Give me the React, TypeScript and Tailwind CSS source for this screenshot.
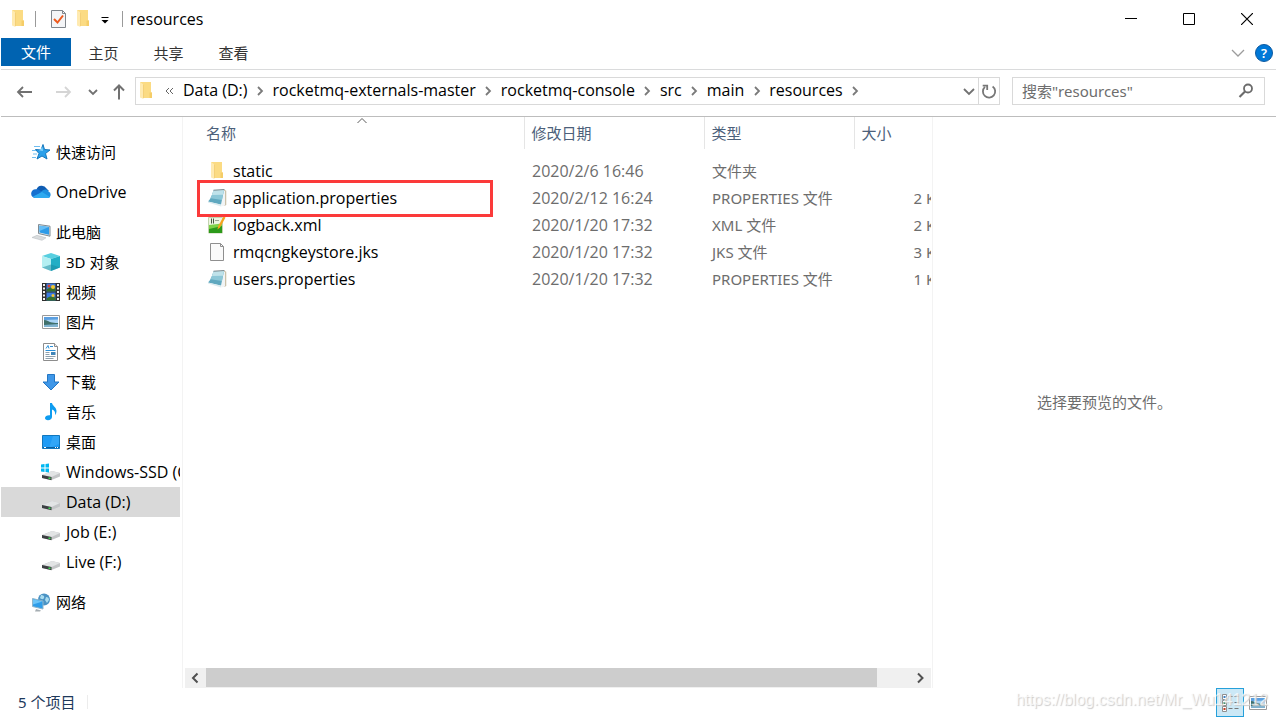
import { useState } from 'react'
import type { ReactNode } from 'react'
import { clsx } from 'clsx'

type IconName =
  | 'star' | 'cloud' | 'pc' | 'cube' | 'film' | 'picture' | 'document' | 'download'
  | 'music' | 'desktop' | 'winDrive' | 'drive' | 'network'

type FileKind = 'folder' | 'notepad' | 'xml' | 'blank'

const SIDEBAR: { label: string; icon: IconName; latin?: boolean; children?: { label: string; icon: IconName; latin?: boolean }[] }[] = [
  { label: '快速访问', icon: 'star' },
  { label: 'OneDrive', icon: 'cloud', latin: true },
  {
    label: '此电脑',
    icon: 'pc',
    children: [
      { label: '3D 对象', icon: 'cube' },
      { label: '视频', icon: 'film' },
      { label: '图片', icon: 'picture' },
      { label: '文档', icon: 'document' },
      { label: '下载', icon: 'download' },
      { label: '音乐', icon: 'music' },
      { label: '桌面', icon: 'desktop' },
      { label: 'Windows-SSD (C:)', icon: 'winDrive', latin: true },
      { label: 'Data (D:)', icon: 'drive', latin: true },
      { label: 'Job (E:)', icon: 'drive', latin: true },
      { label: 'Live (F:)', icon: 'drive', latin: true },
    ],
  },
  { label: '网络', icon: 'network' },
]

const PATH = ['Data (D:)', 'rocketmq-externals-master', 'rocketmq-console', 'src', 'main', 'resources']

const FILES: { name: string; kind: FileKind; date: string; type: string; size: string; marked?: boolean }[] = [
  { name: 'static',                 kind: 'folder',  date: '2020/2/6 16:46',  type: '文件夹',          size: '' },
  { name: 'application.properties', kind: 'notepad', date: '2020/2/12 16:24', type: 'PROPERTIES 文件', size: '2 KB', marked: true },
  { name: 'logback.xml',            kind: 'xml',     date: '2020/1/20 17:32', type: 'XML 文件',        size: '2 KB' },
  { name: 'rmqcngkeystore.jks',     kind: 'blank',   date: '2020/1/20 17:32', type: 'JKS 文件',        size: '3 KB' },
  { name: 'users.properties',       kind: 'notepad', date: '2020/1/20 17:32', type: 'PROPERTIES 文件', size: '1 KB' },
]

function Svg({ children, className = 'w-5 h-5', box = '0 0 20 20' }: {
  children: ReactNode; className?: string; box?: string
}) {
  return <svg viewBox={box} className={clsx('block shrink-0', className)} fill="none" aria-hidden="true">{children}</svg>
}

function FolderIcon() {
  return (
    <Svg>
      <path d="M4 1h11v10.500h1V17H7z" fill="#fbdb83" />
      <path d="M13.500 11.500H16V17h-2.500z" fill="#f5cd68" />
      <path d="M4 1l3.500 2.500V18L4 16.500z" fill="#ffeab0" />
      <path d="M7.500 3.500V17" stroke="#f1cb70" strokeWidth=".8" />
    </Svg>
  )
}

function PictureArt() {
  return (
    <>
      <path d="M1.500 3.500h17v13h-17z" fill="#fff" stroke="#9a9a9a" />
      <path d="M3 5h14v10H3z" fill="#a9d3f5" />
      <path d="M3 5h14v2.500L3 8z" fill="#5b9fe0" />
      <path d="M3 8c3 0 5 2 8 2.500s4 .500 6 .500v2H3z" fill="#3f6f6a" />
      <path d="M3 13l14-1v3H3z" fill="#7fb2cf" />
    </>
  )
}

function DriveArt() {
  return (
    <>
      <path d="M1 13l10-4 8 2v3.500L10.500 18 1 16z" fill="#c3c5c7" />
      <path d="M1 13l10-4 8 2-8.500 4z" fill="#e2e4e5" />
      <path d="M1 13l9.500 2v3.200L1 16z" fill="#3c4043" />
      <path d="M7.500 15.500h2V17h-2z" fill="#3ddc52" />
    </>
  )
}

const ICONS: Record<IconName, ReactNode> = {
  star: (
    <>
      <path d="M12 2.500l1.500 5 5.500.500-4.500 3.500 1.500 5.500-5-3-5 3 2-5.500L4.500 7.500l5.500.500z" fill="#2ba0ea" stroke="#1477bd" />
      <path d="M3 4.500h6M1 8.500h4M2 12h4M1 15.500h4" stroke="#6fbdf0" />
      <path d="M11.500 5l.500 4-4-.500z" fill="#7fd0fb" />
    </>
  ),
  cloud: (
    <>
      <path d="M5.500 7.500a5.500 5.500 0 0110-1L18 9 6 12z" fill="#0f5cb2" />
      <path d="M4.500 16A4.300 4.300 0 014.500 7.300c2-.300 3 .200 4.500 1.200L13 12z" fill="#1570d0" />
      <path d="M10 10c2-3 6-3.500 7.500-.500a3.400 3.400 0 01-.500 6.500H5z" fill="#1e90e0" />
      <path d="M2 14.500L11 10l8 5c-.500.700-1.200 1-2 1H4.500c-1 0-2-.700-2.500-1.500z" fill="#2eaaf0" />
    </>
  ),
  pc: (
    <>
      <path d="M7.500 2.500l11.500 1.700v10L7.500 11.500z" fill="#dfe7ec" stroke="#7f8b93" />
      <path d="M8.500 3.700l9.500 1.400v7.700l-9.500-2.200z" fill="#2d9be8" />
      <path d="M8.500 3.700l9.500 1.400-9.500 4z" fill="#65bdf5" />
      <path d="M1 15.500l5-2.200 9 2.500-4 2.500z" fill="#d9dcde" stroke="#b0b6ba" strokeWidth=".500" />
    </>
  ),
  cube: (
    <>
      <path d="M10 1l9 3-9 3-9-3z" fill="#58cfe0" />
      <path d="M1 4l9 3v12l-9-3.500z" fill="#b4eff2" />
      <path d="M19 4l-9 3v12l9-3.500z" fill="#22aec5" />
      <path d="M1 15.500l9-3 9 3-9 3.500z" fill="#16889f" fillOpacity=".5" />
    </>
  ),
  film: (
    <>
      <path d="M1 1h18v18H1z" fill="#2f2f2f" />
      <path d="M5.500 1.500h9v8h-9z" fill="#3a7be0" />
      <path d="M5.500 10.500h9v8h-9z" fill="#3a7be0" />
      <path d="M6 7l3-1.500 5.500 1v3h-9zM6 16l3-1.500 5.500 1v3h-9z" fill="#37702b" />
      <circle cx="12" cy="5" r="2" fill="#f3c72d" />
      <circle cx="8" cy="4" r="1.500" fill="#d94132" />
      <circle cx="12" cy="13.500" r="1.500" fill="#f3c72d" />
      <path d="M3 2v17M17 2v17" stroke="#f2f2f2" strokeWidth="2" strokeDasharray="2 1.500" />
    </>
  ),
  picture: <PictureArt />,
  document: (
    <>
      <path d="M2.500 1.500h11l3 3v14h-14z" fill="#fff" stroke="#8d8d8d" />
      <path d="M13.500 1.500v3h3" fill="#eee" stroke="#8d8d8d" />
      <path d="M5 6.500l2-3 1 3M9 4.500h3M4.500 8.500h10" stroke="#2a8fd8" />
      <path d="M4.500 10.500h4M4.500 12.500h4M4.500 14.500h10M4.500 16.500h8" stroke="#8ea0ad" />
      <path d="M10 10h4.500v3H10z" fill="#3f85b8" />
    </>
  ),
  download: <path d="M6.500 2.500h7v7.500h4.500L10 18 2 10h4.500z" fill="#3f97e8" stroke="#2376c4" />,
  music: (
    <path d="M9 1h2c.500 3 4.500 4 4.500 8 0 1.500-.500 3-1.500 4 .500-3-.500-4.500-3-5.500v7.500c0 2-1.800 3.200-4 3.200-1.800 0-3-.800-3-2.200 0-1.700 2-3 5-2.700z" fill="#0e9cf0" />
  ),
  desktop: (
    <>
      <path d="M1.500 3.500h17v13h-17z" fill="#1e9bf5" stroke="#1177bd" />
      <path d="M12 4h6v8L8 16z" fill="#45b2fa" fillOpacity=".5" />
      <path d="M2 15.500h16" stroke="#0a5f9f" />
      <path d="M3 15.500h2M14 15.500h1M16 15.500h1" stroke="#fff" />
    </>
  ),
  winDrive: (
    <>
      <DriveArt />
      <path d="M0 2.500L3.500 2v3.500H0zM4.500 2L8 1.500v4H4.500zM0 6.500h3.500V10L0 9.500zM4.500 6.500H8v4l-3.500-.500z" fill="#00b7f1" />
    </>
  ),
  drive: <DriveArt />,
  network: (
    <>
      <circle cx="13" cy="7.500" r="6" fill="#4b93c4" />
      <path d="M10 3c2 0 4 1 3 3s-3 1-4 0zM15 5c2 0 3 1 3 3l-2 3-2-3z" fill="#a9dcef" />
      <path d="M1.500 6.500l10.500 2.500v8L1.500 14.500z" fill="#2e9de9" stroke="#8fb5cb" />
      <path d="M2 7.200l9.500 2.300-9.500 3z" fill="#6cc4f7" />
      <path d="M5 17l5 1.500-1 1H4z" fill="#a5adb2" />
    </>
  ),
}

const FILE_ICONS: Record<FileKind, ReactNode> = {
  folder: <FolderIcon />,
  notepad: (
    <Svg>
      <path d="M17 2l2.200.8V17l-2.200 1z" fill="#b9a987" />
      <path d="M16.500 2.500L18.300 3v14.500L14 18.500z" fill="#f1f4f5" />
      <path d="M6.500 2.500L17 1.800l-3 15L1 13.500c3-3 4-6.500 5.500-11z" fill="#5fa8bf" />
      <path d="M6.500 2.500L17 1.800l-2 10.200L3.500 10.200c1.200-2.200 2-4.700 3-7.700z" fill="#8cc7d7" />
      <path d="M6.500 2.500L17 1.800l-1 5L5 7z" fill="#bfe2ea" />
      <path d="M1 13.500l13 3v2L1 14.500z" fill="#dcebef" />
      <path d="M6.500 2.200L17.500 1.500" stroke="#7f8a8e" />
    </Svg>
  ),
  xml: (
    <Svg>
      <path d="M1.500 2.500h14v15.500h-14z" fill="#eef5e2" stroke="#c3d3b0" />
      <path d="M2 10l13-1.500V18H2z" fill="#7ed348" />
      <path d="M2 14l13-3v7H2z" fill="#2c9a1a" />
      <path d="M4.500 3.500v5M6.500 3.500v5M8.500 5.500h1M10.500 5.500h1" stroke="#4b5542" />
      <path d="M16.500 1.500l2 1-5.500 10-2.500 2 .500-3z" fill="#f6a31d" />
    </Svg>
  ),
  blank: (
    <Svg>
      <path d="M3.500 1.500h10l3 3v14h-13z" fill="#fafafa" stroke="#8f8f8f" />
      <path d="M13.500 1.500v3h3" stroke="#8f8f8f" />
    </Svg>
  ),
}

function Chevron({ direction, className }: { direction: 'right' | 'down'; className?: string }) {
  return (
    <Svg box="0 0 12 12" className={className ?? 'w-3 h-3'}>
      <path d={direction === 'right' ? 'M4 2l4 4-4 4' : 'M2 4l4 4 4-4'} stroke="currentColor" strokeWidth="1.800" />
    </Svg>
  )
}

function TitleBar() {
  return (
    <header className="flex h-[38px] items-center">
      <div className="flex flex-1 items-center pl-[7px]">
        <FolderIcon />
        <span className="mx-[7px] h-4 w-px bg-[#9a9a9a]" />
        <button aria-label="属性" className="ml-1.5 mr-1">
          <Svg>
            <path d="M2.500 1.500h11l3 3v14h-14z" fill="#f4f5f7" stroke="#80868c" />
            <path d="M13.500 1.500v3h3" stroke="#80868c" />
            <path d="M5 10l3.500 3.500L14 6.500" stroke="#ed5a1e" strokeWidth="2" />
          </Svg>
        </button>
        <button aria-label="新建文件夹"><FolderIcon /></button>
        <button aria-label="自定义快速访问工具栏" className="ml-1.5 mr-[11px]">
          <Svg box="0 0 12 12" className="h-3 w-3">
            <path d="M2.500 4.500h7" stroke="#000" />
            <path d="M2.500 7h7L6 10.500z" fill="#000" />
          </Svg>
        </button>
        <span className="h-4 w-px bg-[#9a9a9a]" />
        <h1 className="pl-[7px] font-['Open_Sans',sans-serif] text-base leading-5">resources</h1>
      </div>
      <div className="flex h-full">
        <button aria-label="最小化" className="flex w-[58px] items-center justify-center">
          <Svg box="0 0 12 12" className="h-3 w-3"><path d="M0 5.500h12" stroke="#000" /></Svg>
        </button>
        <button aria-label="最大化" className="flex w-[58px] items-center justify-center">
          <Svg box="0 0 12 12" className="h-3 w-3"><path d="M.5.5h11v11H.5z" stroke="#000" /></Svg>
        </button>
        <button aria-label="关闭" className="flex w-[58px] items-center justify-center">
          <Svg box="0 0 12 12" className="h-3 w-3"><path d="M0 0l12 12M12 0L0 12" stroke="#000" strokeWidth="1.200" /></Svg>
        </button>
      </div>
    </header>
  )
}

function Ribbon() {
  return (
    <nav className="flex h-8 items-start justify-between border-b border-[#dadbdc]">
      <div className="flex h-7 text-[#333]">
        <button className="w-[70px] bg-[#0063b1] text-white">文件</button>
        {['主页', '共享', '查看'].map((tab) => (
          <button key={tab} className="w-[65px] pt-0.5">{tab}</button>
        ))}
      </div>
      <div className="flex h-[30px] items-center gap-2.5 pr-[3px]">
        <button aria-label="展开功能区" className="text-[#9c9c9c]">
          <Svg box="0 0 14 14" className="h-3.5 w-3.5"><path d="M1 4l6 6 6-6" stroke="currentColor" strokeWidth="1.300" /></Svg>
        </button>
        <button aria-label="帮助" className="h-[18px] w-[18px] rounded-full border border-[#0e5aa0] bg-[#0078d7] text-[13px] font-semibold leading-4 text-white">?</button>
      </div>
    </nav>
  )
}

function AddressRow() {
  const [query, setQuery] = useState('')

  return (
    <div className="flex h-[47px] items-start border-b border-[#bdbdbd] pb-2.5 pr-[11px] pt-[7px]">
      <div className="flex h-7 w-[134px] shrink-0 items-center pl-3.5 pt-0.5 text-[#717171]">
        <button aria-label="后退">
          <Svg><path d="M2.500 10H17M8 5l-5 5 5 5" stroke="currentColor" strokeWidth="1.800" /></Svg>
        </button>
        <button aria-label="前进" disabled className="ml-[18px] text-[#d5d5d5]">
          <Svg><path d="M3 10h14.500M12 5l5 5-5 5" stroke="currentColor" strokeWidth="1.800" /></Svg>
        </button>
        <button aria-label="最近浏览的位置" className="ml-3.5"><Chevron direction="down" /></button>
        <button aria-label="上移" className="ml-2.5">
          <Svg><path d="M10 17.500V3M5 8.500l5-5 5 5" stroke="currentColor" strokeWidth="2" /></Svg>
        </button>
      </div>

      <div className="flex h-7 min-w-0 flex-1 items-center border border-[#d9d9d9]">
        <FolderIcon />
        <button aria-label="更多位置" className="ml-2 mr-[9px] text-[#666]">
          <Svg box="0 0 10 12" className="h-3 w-2.5"><path d="M5 3L2 6l3 3M9 3L6 6l3 3" stroke="currentColor" /></Svg>
        </button>
        {PATH.map((part) => (
          <span key={part} className="flex items-center whitespace-nowrap pb-0.5">
            <a href="#" className="font-['Open_Sans',sans-serif] text-base leading-5 text-black">{part}</a>
            <span className="flex w-[25px] justify-center pt-0.5 text-[#7a7a7a]"><Chevron direction="right" /></span>
          </span>
        ))}
        <button aria-label="以前的位置" className="ml-auto mr-[3px] text-[#717171]">
          <Svg box="0 0 12 12" className="h-3 w-3"><path d="M1 4l5 5 5-5" stroke="currentColor" strokeWidth="1.800" /></Svg>
        </button>
        <button aria-label="刷新" className="flex h-full w-[21px] items-center justify-center border-l border-[#d9d9d9] text-[#777]">
          <Svg className="h-[18px] w-[18px]">
            <path d="M14 5a6.800 6.800 0 11-8.500.500" stroke="currentColor" strokeWidth="2" />
            <path d="M3 4h5v5" stroke="currentColor" strokeWidth="2" />
          </Svg>
        </button>
      </div>

      <label className="ml-3 flex h-7 w-[253px] items-center border border-[#d9d9d9] pl-[9px] pr-2">
        <input
          value={query}
          onChange={(e) => setQuery(e.target.value)}
          aria-label="搜索"
          placeholder={'搜索"resources"'}
          className="min-w-0 flex-1 outline-none placeholder:text-[#6d6d6d]"
        />
        <Svg>
          <circle cx="12" cy="7.500" r="4" stroke="#6b6b6b" strokeWidth="1.800" />
          <path d="M9 10.500L3.500 16" stroke="#6b6b6b" strokeWidth="2.200" />
        </Svg>
      </label>
    </div>
  )
}

function SidebarItem({ label, icon, latin, nested, active, onClick }: {
  label: string; icon: IconName; latin?: boolean; nested?: boolean; active: boolean; onClick: () => void
}) {
  return (
    <button
      onClick={onClick}
      className={clsx(
        'flex h-[30px] w-full items-center gap-[5px] overflow-hidden whitespace-nowrap text-left text-black',
        nested ? 'pl-10' : 'pl-[30px]',
        latin && "font-['Open_Sans',sans-serif] text-base leading-5",
        active && 'bg-[#d9d9d9]',
      )}>
      <Svg>{ICONS[icon]}</Svg>
      {label}
    </button>
  )
}

function Sidebar() {
  const [active, setActive] = useState('Data (D:)')

  return (
    <aside className="w-[182px] shrink-0 border-r border-[#f3f3f3] pr-0.5 pt-5">
      <ul className="flex flex-col gap-2.5">
        {SIDEBAR.map((root) => (
          <li key={root.label}>
            <SidebarItem label={root.label} icon={root.icon} latin={root.latin}
              active={active === root.label} onClick={() => setActive(root.label)} />
            {root.children?.map((child) => (
              <SidebarItem key={child.label} label={child.label} icon={child.icon} latin={child.latin} nested
                active={active === child.label} onClick={() => setActive(child.label)} />
            ))}
          </li>
        ))}
      </ul>
    </aside>
  )
}

function FileTable() {
  return (
    <table className="w-[770px] table-fixed text-left text-[#6d6d6d]">
      <colgroup>
        <col className="w-[341px]" />
        <col className="w-[180px]" />
        <col className="w-[150px]" />
        <col />
      </colgroup>
      <thead>
        <tr className="h-8 text-[#4c607a]">
          <th className="relative border-r border-[#e5e5e5] pl-[23px] font-normal">
            名称
            <span className="absolute left-[173px] top-0 text-[#5c5c5c]">
              <Svg box="0 0 12 8" className="h-2 w-3"><path d="M1.500 6L6 1.500 10.500 6" stroke="currentColor" /></Svg>
            </span>
          </th>
          <th className="border-r border-[#e5e5e5] pl-[7px] font-normal">修改日期</th>
          <th className="border-r border-[#e5e5e5] pl-[7px] font-normal">类型</th>
          <th className="pl-[7px] font-normal">大小</th>
        </tr>
      </thead>
      <tbody>
        <tr className="h-2"><td colSpan={4} /></tr>
        {FILES.map((file) => (
          <tr key={file.name} className="h-[27px] whitespace-nowrap">
            <td className="relative pl-6 font-['Open_Sans',sans-serif] text-base leading-5 text-black">
              <div className="flex items-center gap-1.5">
                {FILE_ICONS[file.kind]}
                {file.name}
              </div>
              {file.marked && (
                <span className="pointer-events-none absolute -top-1 left-3.5 z-10 h-[37px] w-[296px] border-3 border-[#fb3a3a]" />
              )}
            </td>
            <td className="pl-2 font-['Open_Sans',sans-serif] text-base leading-5">{file.date}</td>
            <td className="pl-2">{file.type}</td>
            <td className="pr-2 text-right">{file.size}</td>
          </tr>
        ))}
      </tbody>
    </table>
  )
}

function HorizontalScrollbar() {
  return (
    <div className="ml-0.5 flex h-5 bg-[#f0f0f0] text-[#505050]">
      <button aria-label="向左滚动" className="flex w-[21px] items-center justify-center">
        <Svg box="0 0 12 12" className="h-3 w-3"><path d="M7.500 1.500L3 6l4.500 4.500" stroke="currentColor" strokeWidth="2" /></Svg>
      </button>
      <div className="mb-px flex-1 bg-[#cdcdcd]" />
      <button aria-label="向右滚动" className="ml-[33px] flex w-[21px] items-center justify-center">
        <Svg box="0 0 12 12" className="h-3 w-3"><path d="M3 1.500L7.500 6 3 10.500" stroke="currentColor" strokeWidth="2" /></Svg>
      </button>
    </div>
  )
}

function StatusBar() {
  return (
    <footer className="relative flex h-[30px] items-start justify-between pr-2">
      <div className="flex h-7 items-center pl-[17px] text-[#1e395b]">
        5 个项目
        <span className="ml-3 h-3.5 w-px bg-[#ececec]" />
      </div>
      <div className="flex">
        <button aria-label="详细信息" className="flex h-[29px] w-7 items-center justify-center border border-[#26a0da] bg-[#cbe8f6]">
          <Svg>
            {[1, 7, 13].map((y) => (
              <g key={y}>
                <path d={`M2.500 ${y}.5h4v5h-4z`} fill="#fff" stroke="#8f8f8f" />
                <path d={`M8.500 ${y + 2}.5h4M14.500 ${y + 2}.5h4`} stroke="#777" />
              </g>
            ))}
            <path d="M3.500 3h2v2h-2z" fill="#3d7fc1" />
            <path d="M3.500 9h2v2h-2z" fill="#3c8c66" />
            <path d="M3.500 15h2v2h-2z" fill="#c33b22" />
          </Svg>
        </button>
        <button aria-label="大缩略图" className="ml-1 flex h-[29px] items-center"><Svg><PictureArt /></Svg></button>
      </div>
      <span className="pointer-events-none absolute right-2 top-0.5 font-['Liberation_Sans',sans-serif] text-base leading-5 text-white/70 [text-shadow:1px_1px_1px_#ccc]">
        https://blog.csdn.net/Mr_Wu141212
      </span>
    </footer>
  )
}

export default function App() {
  return (
    <div className="flex h-screen flex-col overflow-hidden bg-white pl-px pr-0.5 font-['Noto_Sans','Noto_Sans_CJK_SC',sans-serif] text-[15px] leading-5 text-black">
      <TitleBar />
      <Ribbon />
      <AddressRow />
      <div className="flex min-h-0 flex-1">
        <Sidebar />
        <main className="flex min-w-0 flex-1 flex-col pr-px">
          <div className="flex-1 overflow-hidden">
            <FileTable />
          </div>
          <HorizontalScrollbar />
        </main>
        <section className="flex w-[344px] shrink-0 items-center justify-center border-l border-[#f3f3f3] pb-0.5 text-[#6d6d6d]">
          选择要预览的文件。
        </section>
      </div>
      <StatusBar />
    </div>
  )
}
